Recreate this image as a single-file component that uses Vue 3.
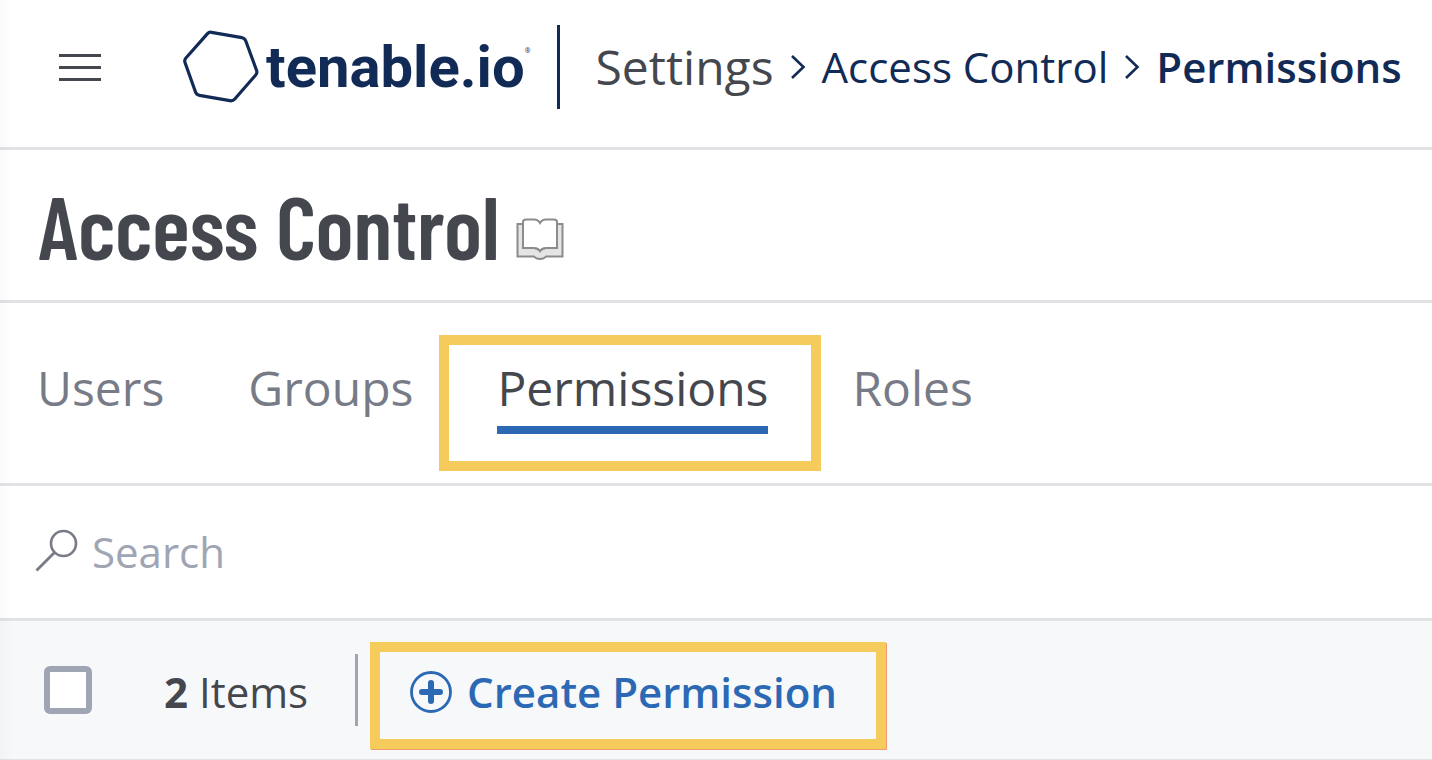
<script setup>
import { ref } from 'vue'

const tabs = ['Users', 'Groups', 'Permissions', 'Roles']
const active = ref('Permissions')
const search = ref('')
const allSelected = ref(false)
</script>

<template>
  <div class="page">
    <header class="topbar">
      <button class="menu" type="button" aria-label="Open menu">
        <svg width="42" height="30" viewBox="0 0 42 30" aria-hidden="true">
          <path d="M0 3.500H42M0 15.500H42M0 27.500H42" stroke="#45474f" stroke-width="2.900" />
        </svg>
      </button>
      <a class="brand" href="#">
        <svg width="76" height="74" viewBox="0 0 76 74" aria-hidden="true">
          <path
            d="M24.500 3.600Q26 1.900 28.500 2.300L59 7.700Q61.800 8.300 62.800 11L73.600 40.500Q74.500 43 72.700 45L51.800 69Q49.800 71.200 46.800 70.700L16.500 65.400Q13.500 64.800 12.500 62L2 32.500Q1.100 30 2.900 28Z"
            fill="none" stroke="#112b56" stroke-width="3.200" stroke-linejoin="round"
          />
        </svg>
        <span class="wordmark">tenable.io</span><span class="reg">®</span>
      </a>
      <span class="rule"></span>
      <nav class="crumbs" aria-label="Breadcrumb">
        <a class="root" href="#">Settings</a>
        <svg width="16" height="26" viewBox="0 0 16 26" aria-hidden="true">
          <path d="M2 2L13.500 13L2 24" fill="none" stroke="#112b56" stroke-width="2.600" />
        </svg>
        <a href="#">Access Control</a>
        <svg width="16" height="26" viewBox="0 0 16 26" aria-hidden="true">
          <path d="M2 2L13.500 13L2 24" fill="none" stroke="#112b56" stroke-width="2.600" />
        </svg>
        <a class="current" href="#" aria-current="page">Permissions</a>
      </nav>
    </header>

    <section class="heading">
      <h1>Access Control</h1>
      <a class="docs" href="#" aria-label="Documentation">
        <svg width="48" height="42" viewBox="0 0 48 42" aria-hidden="true">
          <path
            d="M7 6H1.500V38.500H18Q20 41 24 41Q28 41 30 38.500H46.500V6H41V30H30Q26 30 24 33Q22 30 18 30H7Z"
            fill="#e4e4e4" stroke="#8b8b8b" stroke-width="2"
          />
          <path
            d="M7 4Q7 1.500 10 1.500H18Q22 1.500 24 5Q26 1.500 30 1.500H38Q41 1.500 41 4V30H30Q26 30 24 33Q22 30 18 30H7Z"
            fill="#fff" stroke="#8b8b8b" stroke-width="2"
          />
        </svg>
      </a>
    </section>

    <nav class="tabs" aria-label="Access control sections">
      <button
        v-for="tab in tabs"
        :key="tab"
        type="button"
        class="tab"
        :class="{ active: tab === active }"
        @click="active = tab"
      >{{ tab }}</button>
    </nav>

    <label class="search">
      <svg width="43" height="43" viewBox="0 0 43 43" aria-hidden="true">
        <circle cx="28.500" cy="14.500" r="12.500" fill="none" stroke="#777b85" stroke-width="2.600" />
        <path d="M19.500 23.500L1.500 41.500" stroke="#777b85" stroke-width="2.800" />
      </svg>
      <input v-model="search" type="text" placeholder="Search" aria-label="Search" />
    </label>

    <section class="toolbar">
      <input v-model="allSelected" class="check" type="checkbox" aria-label="Select all items" />
      <span class="count"><b>2</b> Items</span>
      <span class="split"></span>
      <button class="create" type="button">
        <svg width="42" height="42" viewBox="0 0 42 42" aria-hidden="true">
          <circle cx="21" cy="21" r="19.500" fill="none" stroke="#2c69b4" stroke-width="2.800" />
          <path d="M21 12V30M12 21H30" stroke="#2c69b4" stroke-width="6" stroke-linecap="round" />
        </svg>
        Create Permission
      </button>
    </section>
  </div>
</template>

<style>
body {
  margin: 0;
  background: #fff;
}
</style>

<style scoped>
.page {
  position: relative;
  font-family: "Open Sans", "Noto Sans", sans-serif;
  font-size: 42px;
  line-height: 60px;
  color: #45474f;
  white-space: nowrap;
  overflow: hidden;
}
.page::after {
  content: "";
  position: absolute;
  inset: 0 auto 0 0;
  width: 12px;
  background: linear-gradient(to right, rgba(0, 0, 0, 0.02), transparent);
  pointer-events: none;
}
* {
  box-sizing: border-box;
}
svg {
  display: block;
  flex: none;
}
a {
  color: inherit;
  text-decoration: none;
}
button {
  padding: 0;
  border: 0;
  background: none;
  font: inherit;
  color: inherit;
  cursor: pointer;
}
.topbar {
  display: flex;
  align-items: center;
  min-height: 150px;
  padding: 0 30px 14px 59px;
  border-bottom: 3px solid #e1e2e6;
}
.menu {
  margin-right: 82px;
}
.brand {
  display: flex;
  align-items: center;
  color: #112b56;
}
.wordmark {
  margin-left: 7px;
  font-family: Roboto, sans-serif;
  font-size: 58px;
  font-weight: 700;
}
.reg {
  font-size: 7px;
  line-height: 8px;
  align-self: flex-start;
  margin-top: 17px;
}
.rule {
  flex: none;
  width: 3px;
  height: 84px;
  margin: 0 36px 0 26px;
  background: #112b56;
}
.crumbs {
  display: flex;
  align-items: center;
  gap: 16px;
  color: #112b56;
}
.root {
  font-size: 48px;
  color: #45474f;
}
.current {
  font-weight: 600;
}
.heading {
  display: flex;
  align-items: center;
  gap: 16px;
  min-height: 153px;
  padding: 0 38px;
  border-bottom: 3px solid #e1e2e6;
}
h1 {
  margin: 0;
  font-family: "Barlow Condensed", "Liberation Sans Narrow", "Roboto Condensed", "Open Sans Condensed", Roboto, sans-serif;
  font-size: 88px;
  line-height: 100px;
  font-weight: 600;
}
.docs {
  padding-top: 28px;
}
.tabs {
  display: flex;
  align-items: center;
  gap: 84px;
  min-height: 183px;
  padding: 0 37px 8px;
  border-bottom: 3px solid #e1e2e6;
  font-size: 48px;
  color: #777b87;
}
.tab {
  position: relative;
  padding: 14px 0 8px;
  border-bottom: 8px solid transparent;
}
.tab.active {
  color: #45474f;
  border-bottom-color: #2c69b4;
}
.tab.active::after {
  content: "";
  position: absolute;
  inset: -9px -53px -45px -58px;
  border: 10px solid #f5cc5b;
}
.search {
  display: flex;
  align-items: center;
  gap: 14px;
  min-height: 135px;
  padding: 0 35px;
  border-bottom: 3px solid #e1e2e6;
}
.search svg {
  margin-bottom: 4px;
}
.search input {
  flex: 1;
  min-width: 0;
  padding: 0;
  border: 0;
  outline: 0;
  background: none;
  font: inherit;
  color: #45474f;
}
.search input::placeholder {
  color: #9fa5b3;
  opacity: 1;
}
.toolbar {
  display: flex;
  align-items: center;
  min-height: 139px;
  padding: 0 44px;
  background: #f7f8fa;
  border-bottom: 1px solid #e1e2e6;
}
.check {
  appearance: none;
  flex: none;
  width: 48px;
  height: 48px;
  margin: 0;
  border: 6px solid #9fa5b3;
  border-radius: 6px;
  background: #fff;
}
.check:checked {
  background: #2c69b4;
}
.count {
  margin-left: 72px;
  padding-top: 4px;
}
.split {
  flex: none;
  width: 3px;
  height: 72px;
  margin: 0 12px 0 47px;
  background: #9fa5b3;
}
.create {
  display: flex;
  align-items: center;
  gap: 15px;
  margin-top: 11px;
  padding: 10px 39px 17px 30px;
  border: 10px solid #f5cc5b;
  box-shadow: 1px 1px 0 #f29a72;
  font-weight: 600;
  color: #2c69b4;
}
</style>
